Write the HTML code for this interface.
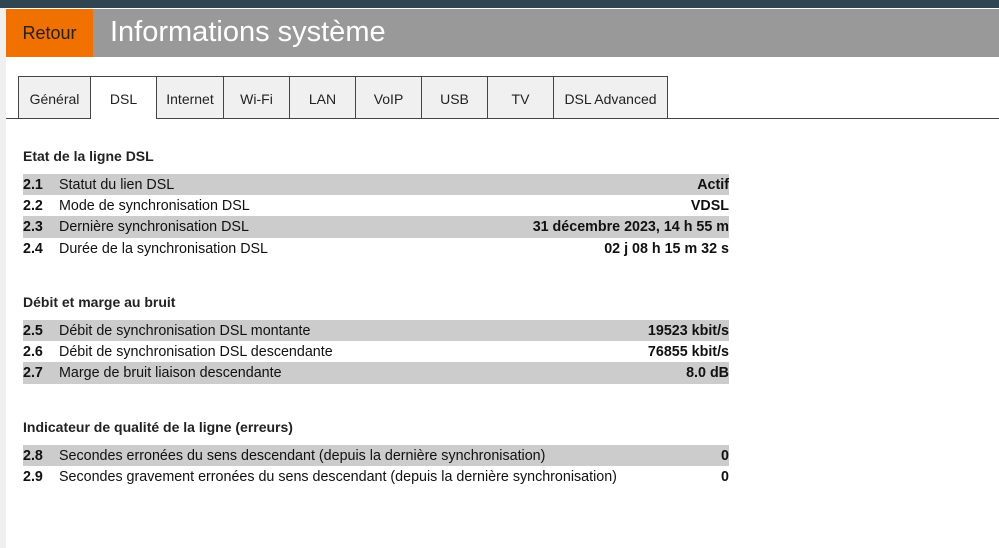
<!DOCTYPE html><html><head><meta charset="utf-8"><style>
body{margin:0;width:999px;height:548px;background:#fff;font-family:"Liberation Sans",Arial,sans-serif;position:relative;overflow:hidden}
.top{position:absolute;left:0;top:0;width:999px;height:8px;background:#2f4551}
.lstrip{position:absolute;left:0;top:8px;width:6px;height:540px;background:#f0f0f0}
.hdr{position:absolute;left:6px;top:9px;width:993px;height:48px;background:#999}
.ret{position:absolute;left:6px;top:9px;width:87px;height:48px;background:#f07000;color:#222;font-size:18px;line-height:48px;text-align:center}
.title{position:absolute;left:110px;top:9px;line-height:46px;color:#fff;font-size:29px}
.line{position:absolute;left:6px;top:118px;width:993px;height:1px;background:#444}
.tab{position:absolute;top:76px;height:42px;background:#f0f0f0;border:1px solid #444;border-bottom:none;box-sizing:border-box;font-size:14px;line-height:44px;text-align:center;color:#222}
.tab.a{background:#fff;height:43px}
h3{position:absolute;left:23px;margin:0;font-size:14px;font-weight:bold;color:#222}
.row{position:absolute;left:23px;width:706px;height:21px;font-size:14.3px;line-height:22px;color:#111}
.row.g{background:#ccc}
.row b{position:absolute;left:0}
.row span{position:absolute;left:36px}
.row i{position:absolute;right:0;font-style:normal;font-weight:bold}
</style></head><body>
<div class="top"></div><div class="lstrip"></div>
<div class="hdr"></div><div class="ret">Retour</div><div class="title">Informations système</div>
<div class="line"></div>
<div class="tab" style="left:18px;width:73px">Général</div>
<div class="tab a" style="left:90px;width:67px">DSL</div>
<div class="tab" style="left:156px;width:68px">Internet</div>
<div class="tab" style="left:223px;width:67px">Wi-Fi</div>
<div class="tab" style="left:289px;width:67px">LAN</div>
<div class="tab" style="left:355px;width:67px">VoIP</div>
<div class="tab" style="left:421px;width:67px">USB</div>
<div class="tab" style="left:487px;width:67px">TV</div>
<div class="tab" style="left:553px;width:115px">DSL Advanced</div>

<h3 style="top:148px">Etat de la ligne DSL</h3>
<div class="row g" style="top:174px"><b>2.1</b><span>Statut du lien DSL</span><i>Actif</i></div>
<div class="row" style="top:195px"><b>2.2</b><span>Mode de synchronisation DSL</span><i>VDSL</i></div>
<div class="row g" style="top:216px;height:22px"><b>2.3</b><span>Dernière synchronisation DSL</span><i>31 décembre 2023, 14 h 55 m</i></div>
<div class="row" style="top:238px"><b>2.4</b><span>Durée de la synchronisation DSL</span><i>02 j 08 h 15 m 32 s</i></div>

<h3 style="top:294px">Débit et marge au bruit</h3>
<div class="row g" style="top:320px"><b>2.5</b><span>Débit de synchronisation DSL montante</span><i>19523 kbit/s</i></div>
<div class="row" style="top:341px"><b>2.6</b><span>Débit de synchronisation DSL descendante</span><i>76855 kbit/s</i></div>
<div class="row g" style="top:362px;height:22px"><b>2.7</b><span>Marge de bruit liaison descendante</span><i>8.0 dB</i></div>

<h3 style="top:419px">Indicateur de qualité de la ligne (erreurs)</h3>
<div class="row g" style="top:445px"><b>2.8</b><span>Secondes erronées du sens descendant (depuis la dernière synchronisation)</span><i>0</i></div>
<div class="row" style="top:466px"><b>2.9</b><span>Secondes gravement erronées du sens descendant (depuis la dernière synchronisation)</span><i>0</i></div>
</body></html>
